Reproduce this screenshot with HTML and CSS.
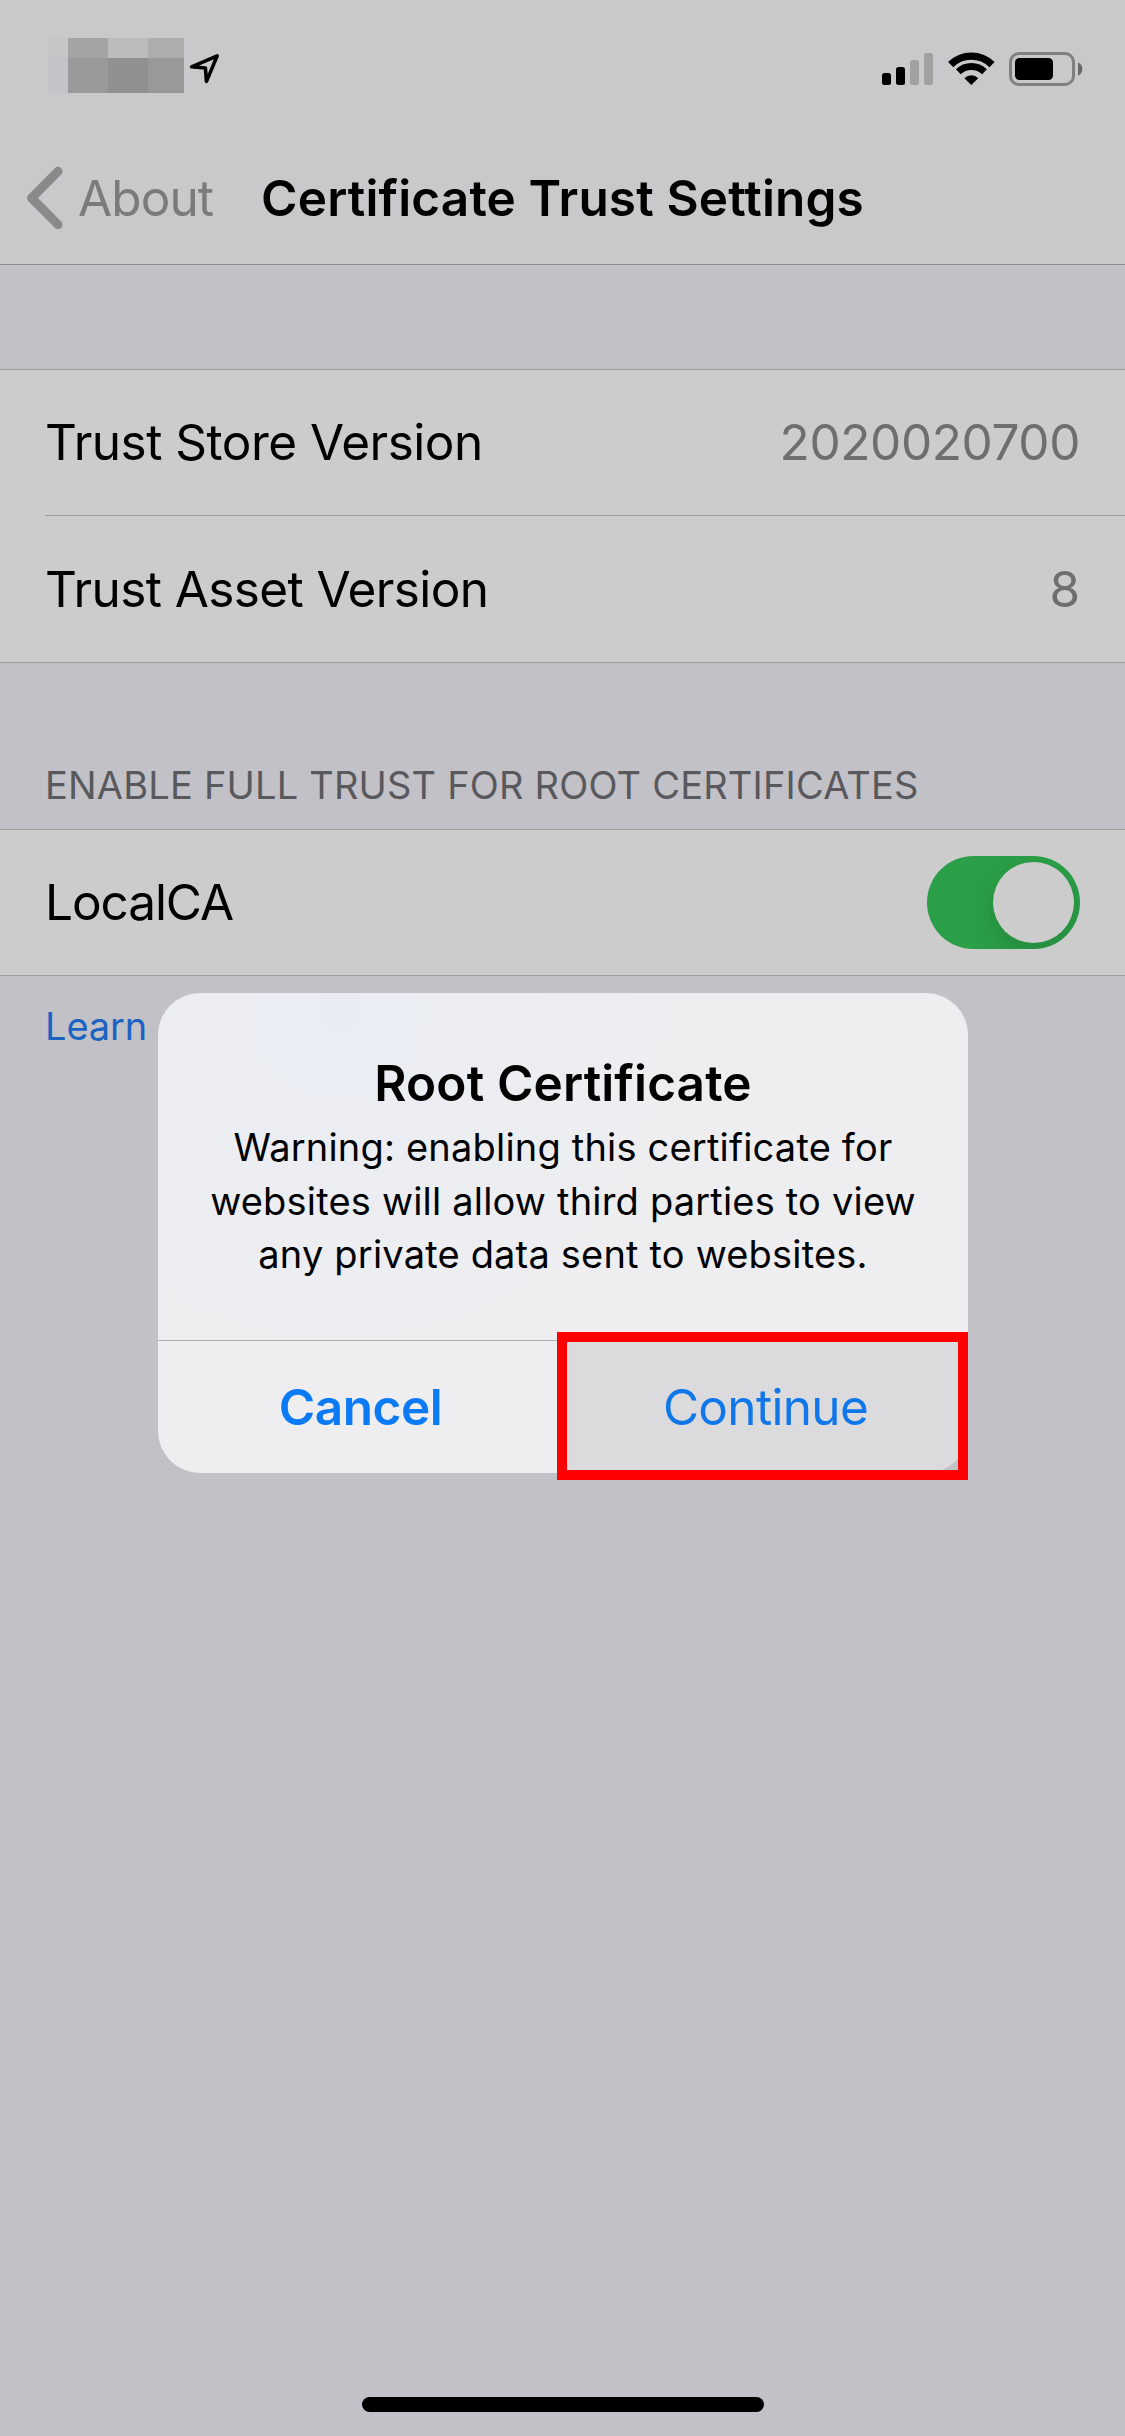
FILE: index.html
```
<!DOCTYPE html>
<html lang="en">
<head>
<meta charset="utf-8">
<title>Certificate Trust Settings</title>
<link rel="stylesheet" href="styles.css">
</head>
<body>
<div class="screen">
  <header class="top">
    <div class="status">
      <svg class="status-left" viewBox="48 38 172 56" aria-hidden="true">
        <g shape-rendering="crispEdges">
          <rect x="48" y="38" width="20" height="20" fill="#c6c6c7"/>
          <rect x="48" y="58" width="20" height="35" fill="#c3c4c8"/>
          <rect x="68" y="38" width="40" height="20" fill="#a4a4a4"/>
          <rect x="68" y="58" width="40" height="35" fill="#9a9a9a"/>
          <rect x="108" y="38" width="40" height="20" fill="#bcbcbc"/>
          <rect x="108" y="58" width="40" height="35" fill="#909090"/>
          <rect x="148" y="38" width="36" height="20" fill="#adadad"/>
          <rect x="148" y="58" width="36" height="35" fill="#999999"/>
        </g>
        <path d="M217.2 55.9 L191.6 66.8 L205.4 68 L206.5 81.4 Z" fill="none" stroke="#000" stroke-width="3.6" stroke-linejoin="round"/>
      </svg>
      <svg class="status-right" viewBox="882 50 201 38" aria-hidden="true">
        <rect x="882" y="73" width="9" height="12" rx="2.5"/>
        <rect x="896" y="67" width="9" height="18" rx="2.5"/>
        <rect x="910" y="60" width="9" height="25" rx="2.5" fill="#a1a1a2"/>
        <rect x="924" y="53" width="9" height="32" rx="2.5" fill="#a1a1a2"/>
        <path d="M950.7 64.6 A29.3 29.3 0 0 1 992 64.6" fill="none" stroke="#000" stroke-width="7.4"/>
        <path d="M958.3 71.8 A18.8 18.8 0 0 1 984.5 71.8" fill="none" stroke="#000" stroke-width="6.8"/>
        <path d="M971.3 85 L964.4 78.2 A9.8 9.8 0 0 1 978.2 78.2 Z"/>
        <rect x="1010.5" y="53.5" width="63" height="31" rx="8.5" fill="none" stroke="#808081" stroke-width="3"/>
        <rect x="1015" y="58" width="38" height="22" rx="4.5"/>
        <path d="M1078 62.5 A7 7 0 0 1 1078 75.5 Z" fill="#69696a"/>
      </svg>
    </div>
    <nav class="nav">
      <a class="back">
        <svg class="chevron" viewBox="0 0 37 64" aria-hidden="true"><path d="M32 5.3 L5.6 32 L32 58.7" fill="none" stroke="#8a8a8b" stroke-width="9" stroke-linecap="round" stroke-linejoin="round"/></svg>
        <span class="back-label">About</span>
      </a>
      <h1 class="title">Certificate Trust Settings</h1>
    </nav>
  </header>

  <main class="content">
    <section class="group versions">
      <div class="row row-first"><span class="label">Trust Store Version</span><span class="value">2020020700</span></div>
      <div class="divider"></div>
      <div class="row row-last"><span class="label label-asset">Trust Asset Version</span><span class="value value-single">8</span></div>
    </section>
    <h2 class="section-title">ENABLE FULL TRUST FOR ROOT CERTIFICATES</h2>
    <section class="group">
      <div class="row"><span class="label label-ca">LocalCA</span><span class="toggle"><span class="knob"></span></span></div>
    </section>
    <a class="learn">Learn</a>
  </main>
  <div class="home-indicator"></div>

  <div class="alert" role="alertdialog">
    <div class="alert-card">
      <div class="alert-body">
        <h3 class="alert-title">Root Certificate</h3>
        <p class="alert-text">Warning: enabling this certificate for<br>websites will allow third parties to view<br>any private data sent to websites.</p>
      </div>
      <div class="actions">
        <button class="action cancel">Cancel</button>
        <button class="action continue">Continue</button>
      </div>
    </div>
    <div class="highlight"></div>
  </div>
</div>
</body>
</html>
```

FILE: styles.css
```
* { box-sizing: border-box; }
body {
  margin: 0;
  background: #c2c1c7;
  color: #000;
  font-family: Inter, "Liberation Sans", sans-serif;
  font-size: 49.5px;
}
h1, h2, h3, p { margin: 0; }
svg { display: block; }

.screen {
  position: relative;
  display: flex;
  flex-direction: column;
  width: 1125px;
  height: 2436px;
  overflow: hidden;
}

.top {
  height: 265px;
  background: #c9c9cb;
  border-bottom: 1px solid #8b8b8d;
}
.status {
  display: flex;
  justify-content: space-between;
  align-items: flex-start;
  height: 132px;
  padding: 38px 42px 0 48px;
}
.status-left { width: 172px; height: 56px; }
.status-right { width: 201px; height: 38px; margin-top: 12px; }

.nav {
  display: grid;
  grid-template-columns: 1fr auto 1fr;
  align-items: center;
  height: 132px;
}
.back {
  display: flex;
  align-items: center;
  gap: 15px;
  padding-left: 26px;
  color: #7b7b7c;
}
.chevron { width: 37px; height: 64px; }
.back-label { letter-spacing: -0.9px; }
.title {
  font-size: 49.5px;
  font-weight: 600;
  letter-spacing: 0.15px;
  white-space: nowrap;
}

.content { flex: 1; }
.group {
  background: #cccccc;
  border-top: 1px solid #9d9d9f;
  border-bottom: 1px solid #9d9d9f;
}
.versions { margin-top: 104px; }
.row {
  display: flex;
  align-items: center;
  justify-content: space-between;
  height: 145px;
  padding: 0 45px;
}
.row-first { padding-bottom: 2px; }
.row-last { height: 146px; }
.divider { height: 1px; margin-left: 45px; background: #9d9d9f; }
.label { letter-spacing: -0.5px; }
.label-asset { letter-spacing: -0.6px; }
.label-ca { padding-bottom: 2px; letter-spacing: -1.07px; }
.value { color: #6e6e6e; letter-spacing: -0.38px; }
.value-single { letter-spacing: 0; }

.section-title {
  padding: 97px 45px 19px;
  color: #59595d;
  font-size: 38px;
  font-weight: 400;
  line-height: 50px;
  letter-spacing: 0.19px;
}
.toggle {
  display: flex;
  justify-content: flex-end;
  width: 153px;
  height: 93px;
  padding: 6px;
  border-radius: 47px;
  background: #2a9f47;
  overflow: hidden;
}
.knob {
  width: 81px;
  height: 81px;
  border-radius: 50%;
  background: #cccccc;
  box-shadow: 0 9px 24px rgba(0, 0, 0, 0.15);
}
.learn {
  display: block;
  padding: 25px 45px 0;
  color: #1b63c2;
  font-size: 38px;
  line-height: 50px;
  letter-spacing: -0.1px;
}
.home-indicator {
  align-self: center;
  width: 402px;
  height: 15px;
  margin: 0 0 24px 1px;
  border-radius: 8px;
  background: #000;
}

.alert {
  position: absolute;
  top: 993px;
  left: 158px;
  width: 810px;
}
.alert-card {
  height: 480px;
  border-radius: 42px;
  background: radial-gradient(circle at 180px 20px, #e9edf3 0, #eeeef1 330px);
  overflow: hidden;
}
.alert-body {
  height: 347px;
  padding-top: 60px;
  text-align: center;
}
.alert-title {
  font-size: 49.5px;
  font-weight: 600;
  line-height: 60px;
  letter-spacing: 0.15px;
}
.alert-text {
  margin-top: 8px;
  font-size: 38px;
  line-height: 53.6px;
  letter-spacing: 0.19px;
}
.actions {
  display: grid;
  grid-template-columns: 1fr 1fr;
  height: 133px;
  border-top: 1px solid #aeaeb1;
}
.action {
  padding: 0;
  border: 0;
  background: none;
  color: #0a7af5;
  font: inherit;
}
.cancel { font-weight: 600; letter-spacing: -0.45px; }
.continue { background: #dbdbde; color: #1077ea; letter-spacing: -0.68px; }
.highlight {
  position: absolute;
  top: 339px;
  left: 399px;
  width: 411px;
  height: 148px;
  border: 10px solid #ff0000;
}
```
